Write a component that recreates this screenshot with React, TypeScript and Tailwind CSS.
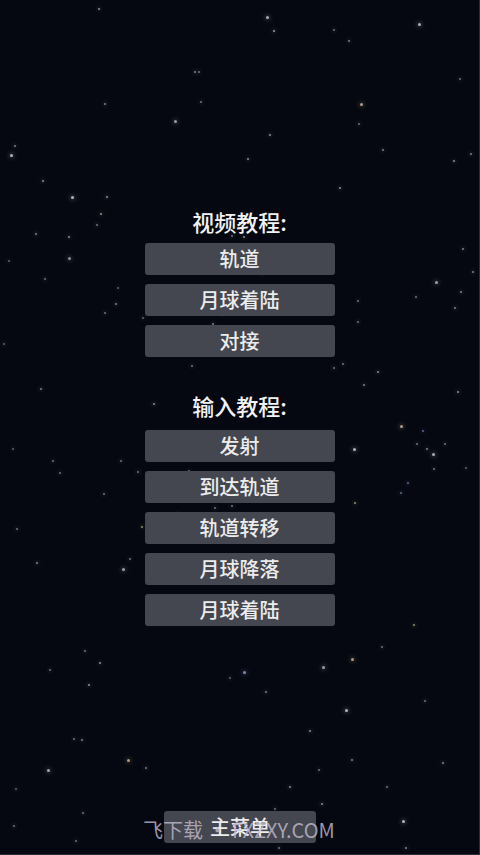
import React from 'react';

// [x, y, size, color]
const STARS: [number, number, number, string][] = [
  [98, 8, 2, '#8a8fa0'], [266, 16, 3, '#a8acb8'], [273, 30, 2, '#9a9eac'], [418, 23, 3, '#a8acb8'],
  [333, 29, 2, '#6d7282'], [348, 40, 2, '#7d8292'], [194, 71, 2, '#7d8292'], [198, 71, 2, '#6d7282'],
  [459, 78, 2, '#6d7282'], [104, 103, 2, '#7d8292'], [200, 101, 2, '#6d7282'], [360, 103, 3, '#b09a88'],
  [174, 120, 3, '#9a9eac'], [358, 123, 2, '#6d7282'], [269, 134, 2, '#8a8fa0'], [10, 154, 3, '#b0b4c0'],
  [14, 145, 2, '#7d8292'], [382, 149, 2, '#7d8292'], [247, 158, 2, '#8a8fa0'], [470, 153, 2, '#7d8292'],
  [453, 160, 2, '#8a8fa0'], [42, 180, 2, '#8a8fa0'], [71, 196, 3, '#b0b4c0'], [106, 196, 2, '#8a8fa0'],
  [339, 187, 2, '#8a8fa0'],
  [100, 213, 2, '#9a8e88'], [96, 224, 2, '#6d7282'], [35, 233, 2, '#7d8292'], [68, 236, 2, '#8a8fa0'],
  [68, 257, 3, '#8a8fa0'], [8, 260, 2, '#5d6272'], [44, 278, 2, '#6d7282'], [117, 287, 2, '#5d6272'],
  [115, 303, 2, '#7d8292'], [104, 312, 2, '#6d7282'], [142, 317, 2, '#5d6272'], [3, 343, 2, '#5d6272'],
  [40, 388, 2, '#7d8292'], [153, 403, 2, '#8a8fa0'], [191, 365, 2, '#6d7282'], [212, 323, 2, '#7d8292'],
  [221, 313, 2, '#6d7282'], [243, 236, 2, '#8a8fa0'], [231, 235, 2, '#6d7282'], [261, 272, 2, '#8a8fa0'],
  [328, 338, 3, '#9a9eac'], [319, 351, 2, '#7d8292'], [333, 367, 2, '#6d7282'], [342, 363, 2, '#6d7282'],
  [377, 371, 2, '#8a8fa0'], [363, 384, 2, '#7d8292'], [357, 300, 2, '#6d7282'], [357, 321, 2, '#6d7282'],
  [415, 296, 2, '#6d7282'], [435, 281, 3, '#9a9eac'], [460, 291, 2, '#7d8292'], [454, 307, 2, '#7d8292'],
  [462, 248, 2, '#7d8292'], [472, 271, 2, '#7d8292'], [457, 391, 2, '#8a8fa0'],
  [12, 448, 2, '#5d6272'], [52, 460, 2, '#6d7282'], [59, 472, 2, '#6d7282'], [120, 460, 2, '#6d7282'],
  [137, 471, 2, '#6d7282'], [154, 476, 2, '#8a8fa0'], [103, 493, 2, '#6d7282'], [16, 528, 2, '#6d7282'],
  [141, 526, 2, '#9a8e70'], [129, 558, 2, '#6d7282'], [122, 568, 3, '#9a9eac'], [36, 562, 2, '#7d8292'],
  [158, 575, 2, '#7d8292'], [188, 470, 2, '#5a6a90'], [214, 507, 2, '#6d7282'], [231, 505, 2, '#6d7282'],
  [177, 513, 2, '#5d6272'], [264, 454, 2, '#9a8e70'], [353, 448, 3, '#b0b4c0'], [400, 425, 3, '#b09a88'],
  [422, 430, 2, '#5a6a90'], [416, 443, 2, '#6d7282'], [426, 448, 2, '#7d8292'], [432, 453, 3, '#a8acb8'],
  [444, 443, 2, '#7d7070'], [433, 468, 2, '#7d7070'], [465, 467, 2, '#5d6272'], [407, 482, 2, '#5a6a90'],
  [400, 492, 2, '#5a6a90'], [354, 502, 2, '#9a8e70'], [307, 514, 2, '#6d7282'], [178, 606, 2, '#6d7282'],
  [258, 598, 2, '#6d7282'], [413, 624, 2, '#9a8e70'],
  [84, 650, 2, '#6d7282'], [99, 662, 2, '#8a8fa0'], [49, 669, 2, '#6d7282'], [88, 684, 2, '#8a8fa0'],
  [73, 738, 2, '#6d7282'], [81, 739, 2, '#7d8292'], [127, 759, 3, '#b09a78'], [145, 767, 2, '#6a7a9a'],
  [47, 769, 3, '#a0a4b0'], [15, 788, 2, '#5d6272'], [82, 812, 2, '#6d7282'], [13, 825, 2, '#6d7282'],
  [75, 840, 2, '#6d7282'], [243, 671, 3, '#7a88b0'], [229, 677, 2, '#5d6272'], [265, 691, 2, '#7d8292'],
  [322, 666, 3, '#9a9eac'], [351, 658, 3, '#b09a78'], [381, 646, 2, '#6d7282'], [345, 709, 3, '#b0b4c0'],
  [309, 730, 2, '#8a8fa0'], [424, 700, 2, '#6d7282'], [351, 759, 2, '#7d8292'], [318, 769, 2, '#6d7282'],
  [442, 762, 2, '#7d8292'], [289, 786, 2, '#8a8fa0'], [386, 786, 2, '#6d7282'], [321, 803, 2, '#8a8fa0'],
  [274, 808, 2, '#6d7282'], [402, 820, 3, '#b0b4c0'], [405, 847, 2, '#7d8292'], [278, 847, 2, '#6d7282'],
];

const VIDEO = ['轨道', '月球着陆', '对接'];
const INPUT = ['发射', '到达轨道', '轨道转移', '月球降落', '月球着陆'];

const FONT = { fontFamily: '"Noto Sans CJK SC", "Noto Sans", sans-serif' };

function MenuButton({ label, wide = true }: { label: string; wide?: boolean }) {
  return (
    <button
      className={`${wide ? 'w-[190px]' : 'w-[152px]'} h-8 rounded-[3px] bg-[#44474f] text-[20px] leading-8 font-medium text-[#ececec]`}
      style={FONT}
    >
      {label}
    </button>
  );
}

export default function App() {
  return (
    <div
      className="relative w-[480px] h-[855px] overflow-hidden bg-[#050810] border-r border-b border-[#2a2d36] flex flex-col items-center pt-[209px]"
      style={FONT}
    >
      {/* Starfield */}
      {STARS.map(([x, y, s, c], i) => (
        <span
          key={i}
          className="absolute rounded-full"
          style={{
            left: x,
            top: y,
            width: s,
            height: s,
            backgroundColor: c,
            boxShadow: `0 0 ${s + 2}px ${c}`,
          }}
        />
      ))}

      {/* Video tutorials */}
      <h2 className="relative h-6 text-[22px] leading-6 font-medium text-[#f2f2f2]">视频教程:</h2>
      <div className="relative mt-[10px] flex flex-col gap-[9px]">
        {VIDEO.map(v => <MenuButton key={v} label={v} />)}
      </div>

      {/* Input tutorials */}
      <h2 className="relative mt-[36px] h-6 text-[22px] leading-6 font-medium text-[#f2f2f2]">输入教程:</h2>
      <div className="relative mt-[13px] flex flex-col gap-[9px]">
        {INPUT.map((v, i) => <MenuButton key={i} label={v} />)}
      </div>

      <div className="relative mt-auto mb-[11px] ml-[1px]">
        <MenuButton label="主菜单" wide={false} />
      </div>

      {/* Watermark */}
      <span className="absolute left-[143px] top-[818px] text-[20px] leading-6 text-[#c4bcd0]/80 whitespace-nowrap">
        飞下载 · FXZXY.COM
      </span>
    </div>
  );
}
